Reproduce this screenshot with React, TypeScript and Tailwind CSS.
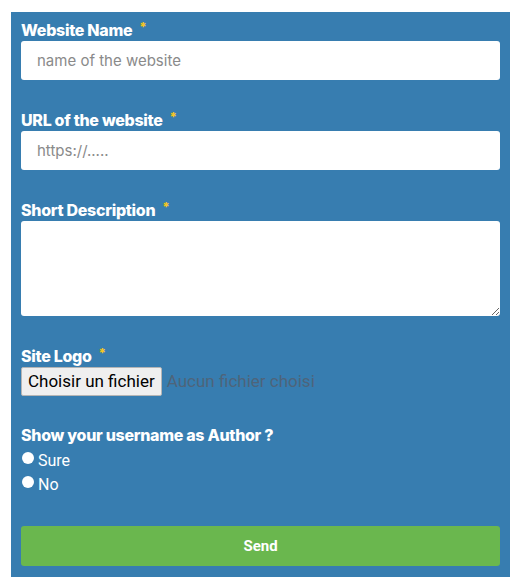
import React from "react";

const Label = ({ children, className = "" }: { children: React.ReactNode; className?: string }) => (
    <p className={`h-[20px] flex items-center text-[16px] font-extrabold text-white tracking-[-0.3px] ${className}`}>
        {children}
        <span className="ml-[7px] text-[13px] text-[#f3c623] relative top-[-2px]">*</span>
    </p>
);

const Radio = ({ label }: { label: string }) => (
    <label className="flex items-center h-[24px] text-white text-[16px]" style={{ fontFamily: "Roboto, sans-serif" }}>
        <span className="w-[12px] h-[12px] rounded-full bg-white ml-[1px] mr-[4px] relative top-[-3px]" />
        {label}
    </label>
);

export default function App() {
    return (
        <main className="w-[520px] h-[587px] bg-white pt-[12px] pl-[11px]" style={{ fontFamily: "Inter, sans-serif" }}>
            <form className="w-[499px] h-[565px] bg-[#377db0] px-[10px] pt-[8px] flex flex-col">
                <Label>Website Name</Label>
                <input
                    className="mt-[1px] h-[39px] bg-white rounded-[3px] px-[16px] text-[15px] text-[#333] placeholder:text-[#8a8a8a] outline-none"
                    placeholder="name of the website"
                />

                <Label className="mt-[30px]">URL of the website</Label>
                <input
                    className="mt-[1px] h-[39px] bg-white rounded-[3px] px-[16px] text-[15px] text-[#333] placeholder:text-[#8a8a8a] outline-none"
                    placeholder="https://....."
                />

                <Label className="mt-[30px]">Short Description</Label>
                <textarea className="mt-[1px] h-[95px] bg-white rounded-[3px] outline-none resize-y" />

                <Label className="mt-[30px]">Site Logo</Label>
                <div className="mt-[1px] flex items-center">
                    <span
                        className="h-[29px] px-[6px] flex items-center bg-[#efefef] border border-[#b5b5b5] rounded-[2px] text-[17px] text-black"
                        style={{ fontFamily: "Roboto, sans-serif" }}
                    >
                        Choisir un fichier
                    </span>
                    <span className="ml-[5px] text-[17px] text-[#4e647a]" style={{ fontFamily: "Roboto, sans-serif" }}>
                        Aucun fichier choisi
                    </span>
                </div>

                <p className="mt-[29px] h-[20px] flex items-center text-[16px] font-extrabold text-white tracking-[-0.3px]">
                    Show your username as Author ?
                </p>
                <div className="mt-[4px] flex flex-col">
                    <Radio label="Sure" />
                    <Radio label="No" />
                </div>

                <button
                    type="submit"
                    className="mt-[29px] h-[40px] bg-[#6ab74e] rounded-[3px] text-white text-[15px] font-bold"
                    style={{ fontFamily: "Roboto, sans-serif" }}
                >
                    Send
                </button>
            </form>
        </main>
    );
}
